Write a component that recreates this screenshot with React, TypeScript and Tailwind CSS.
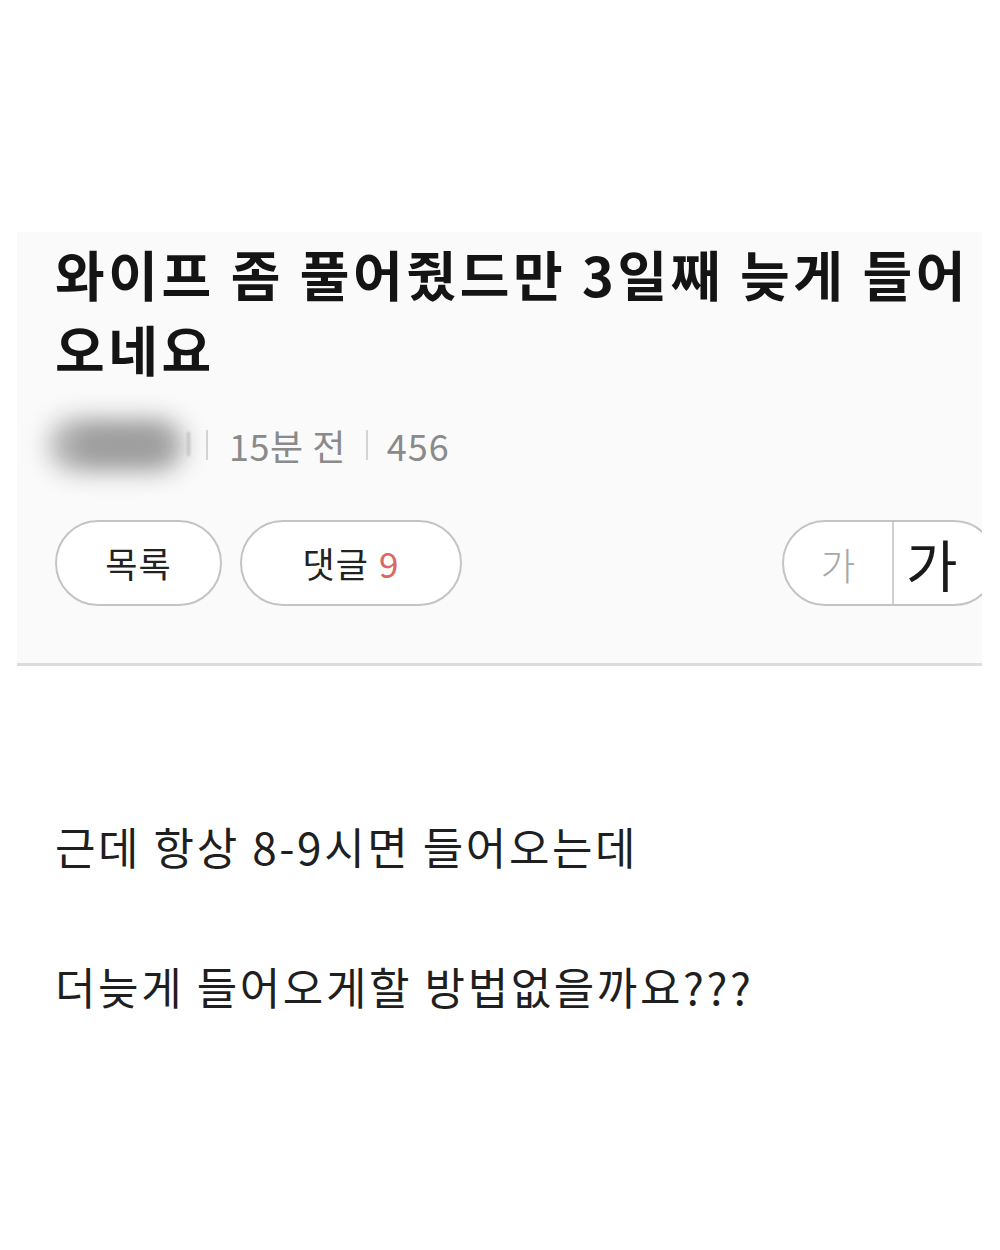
export default function App() {
  return (
    <div
      className="w-[1000px] h-[1250px] bg-white overflow-hidden"
      style={{ fontFamily: '"Noto Sans CJK KR", "Noto Sans", sans-serif' }}
    >
      <div className="h-[232px]" />
      <div className="ml-[17px] w-[965px] bg-[#fafafa] border-b-[3px] border-[#dcdcdc] overflow-hidden pl-[38px] pt-[4px] pb-[57px]">
        <h1 className="text-[54px] leading-[75px] font-bold text-[#141414] tracking-[3.6px] whitespace-nowrap">
          와이프 좀 풀어줬드만 3일째 늦게 들어
          <br />
          오네요
        </h1>

        <div className="mt-[36px] flex items-center h-[46px] text-[36px] text-[#8a8a8a]">
          <div className="-ml-[8px] relative w-[145px] h-[46px] shrink-0">
            <div className="absolute left-[2px] -top-[4px] w-[136px] h-[54px] rounded-full bg-[#b0b0b0] blur-[12px]" />
            <div className="absolute left-[30px] top-[8px] w-[90px] h-[30px] rounded-full bg-[#9c9c9c] blur-[10px]" />
            <div className="absolute right-[2px] top-[10px] w-[3px] h-[24px] bg-[#c4c4c4] blur-[1px]" />
          </div>
          <div className="ml-[14px] w-[2px] h-[30px] bg-[#d4d4d4] shrink-0" />
          <span className="ml-[21px] leading-none tracking-[0.5px]">15분 전</span>
          <div className="ml-[20px] w-[2px] h-[30px] bg-[#d4d4d4] shrink-0" />
          <span className="ml-[19px] leading-none tracking-[1px]">456</span>
        </div>

        <div className="mt-[52px] flex items-center">
          <button className="shrink-0 w-[167px] h-[86px] rounded-full border-2 border-[#c4c4c4] bg-white text-[35px] tracking-[1px] text-[#222] flex items-center justify-center">
            목록
          </button>
          <button className="shrink-0 ml-[18px] w-[222px] h-[86px] rounded-full border-2 border-[#c4c4c4] bg-white text-[35px] tracking-[1px] text-[#222] flex items-center justify-center">
            댓글<span className="ml-[10px] text-[#d9695f]">9</span>
          </button>
          <div className="ml-[320px] shrink-0 w-[215px] h-[86px] rounded-full border-2 border-[#c4c4c4] bg-white flex items-stretch">
            <div className="w-[108px] flex items-center justify-center text-[38px] font-light text-[#a8a8a8]">
              가
            </div>
            <div className="w-[2px] bg-[#d0d0d0]" />
            <div className="flex-1 flex items-center pl-[12px] text-[56px] text-[#1a1a1a]">
              가
            </div>
          </div>
        </div>
      </div>

      <div className="pl-[55px] pt-[150px] text-[44px] leading-[60px] tracking-[2.6px] text-[#1f1f1f]">
        <p>근데 항상 8-9시면 들어오는데</p>
        <p className="mt-[80px]">더늦게 들어오게할 방법없을까요???</p>
      </div>
    </div>
  );
}
